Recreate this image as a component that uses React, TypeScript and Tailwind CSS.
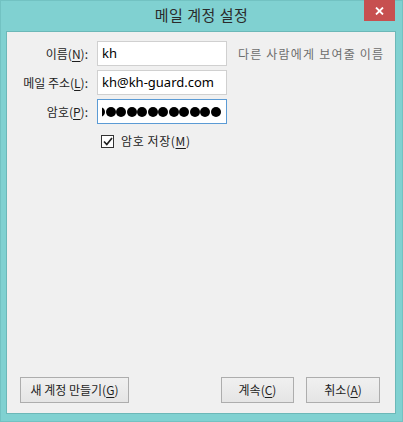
import React from 'react';

const ko = { fontFamily: '"Noto Sans CJK KR", "Noto Sans", sans-serif' };

const Mn: React.FC<{ k: string }> = ({ k }) => <span className="underline underline-offset-2">{k}</span>;

const Field: React.FC<{ label: React.ReactNode; children: React.ReactNode; focused?: boolean }> = ({ label, children, focused }) => (
  <div className="flex items-center h-[25px]">
    <div className="w-[81px] text-right text-[12px] text-[#1e1e1e] leading-none">{label}</div>
    <div
      className={`ml-[9px] w-[130px] h-[25px] bg-white border flex items-center overflow-hidden ${
        focused ? 'border-[#5b9bd5]' : 'border-[#d0d0d0]'
      }`}
    >
      <div className="ml-[4px] flex-1 overflow-hidden flex items-center">{children}</div>
    </div>
  </div>
);

const Button: React.FC<{ children: React.ReactNode; className?: string }> = ({ children, className }) => (
  <button
    className={`h-[26px] border border-[#adadad] bg-gradient-to-b from-[#f0f0f0] to-[#e5e5e5] text-[12px] text-[#1e1e1e] ${className ?? ''}`}
  >
    {children}
  </button>
);

export default function App() {
  const dots = Array.from({ length: 12 });
  return (
    <div className="w-[403px] h-[422px] bg-[#80d1d1] flex flex-col border border-[#72c2c2]" style={ko}>
      <div className="relative h-[30px] flex items-center justify-center">
        <span className="text-[15px] text-[#2b2b2b] tracking-[0.5px] mt-[-1px]">메일 계정 설정</span>
        <div className="absolute right-[7px] top-[-1px] w-[31px] h-[21px] bg-[#c75050] flex items-center justify-center">
          <svg width="9" height="8" viewBox="0 0 9 8">
            <path d="M1 0.5 L8 7.5 M8 0.5 L1 7.5" stroke="white" strokeWidth="1.8" />
          </svg>
        </div>
      </div>
      <div className="ml-[5px] mr-[6px] mb-[7px] flex-1 bg-[#f0f0f0] border border-[#6cb8b8] flex flex-col">
        <div className="pt-[9px] flex flex-col gap-[4px]">
          <div className="flex items-center">
            <Field label={<>이름(<Mn k="N" />):</>}>
              <span className="text-[13px] text-black" style={{ fontFamily: '"Noto Sans", sans-serif' }}>kh</span>
            </Field>
            <span className="ml-[11px] text-[12px] text-[#6d6d6d] tracking-[1.2px] whitespace-nowrap">다른 사람에게 보여줄 이름</span>
          </div>
          <Field label={<>메일 주소(<Mn k="L" />):</>}>
            <span className="text-[13px] text-black whitespace-nowrap" style={{ fontFamily: '"Noto Sans", sans-serif' }}>kh@kh-guard.com</span>
          </Field>
          <Field focused label={<>암호(<Mn k="P" />):</>}>
            <div className="flex gap-[0.5px] ml-[-7px]">
              {dots.map((_, i) => (
                <div key={i} className="w-[10px] h-[10px] rounded-full bg-black shrink-0" />
              ))}
            </div>
          </Field>
        </div>
        <div className="mt-[8px] ml-[94px] flex items-center gap-[7px]">
          <div className="w-[13px] h-[13px] bg-white border border-[#333] flex items-center justify-center">
            <svg width="10" height="9" viewBox="0 0 10 9">
              <path d="M1 4.5 L3.8 7.5 L9 1" stroke="#222" strokeWidth="1.7" fill="none" />
            </svg>
          </div>
          <span className="text-[12px] text-[#1e1e1e] tracking-[0.6px]">암호 저장(<Mn k="M" />)</span>
        </div>
        <div className="flex-1" />
        <div className="flex items-center pl-[13px] pr-[15px] pb-[10px]">
          <Button className="w-[109px]">새 계정 만들기(<Mn k="G" />)</Button>
          <div className="flex-1" />
          <Button className="w-[73px]">계속(<Mn k="C" />)</Button>
          <Button className="w-[74px] ml-[12px]">취소(<Mn k="A" />)</Button>
        </div>
      </div>
    </div>
  );
}
